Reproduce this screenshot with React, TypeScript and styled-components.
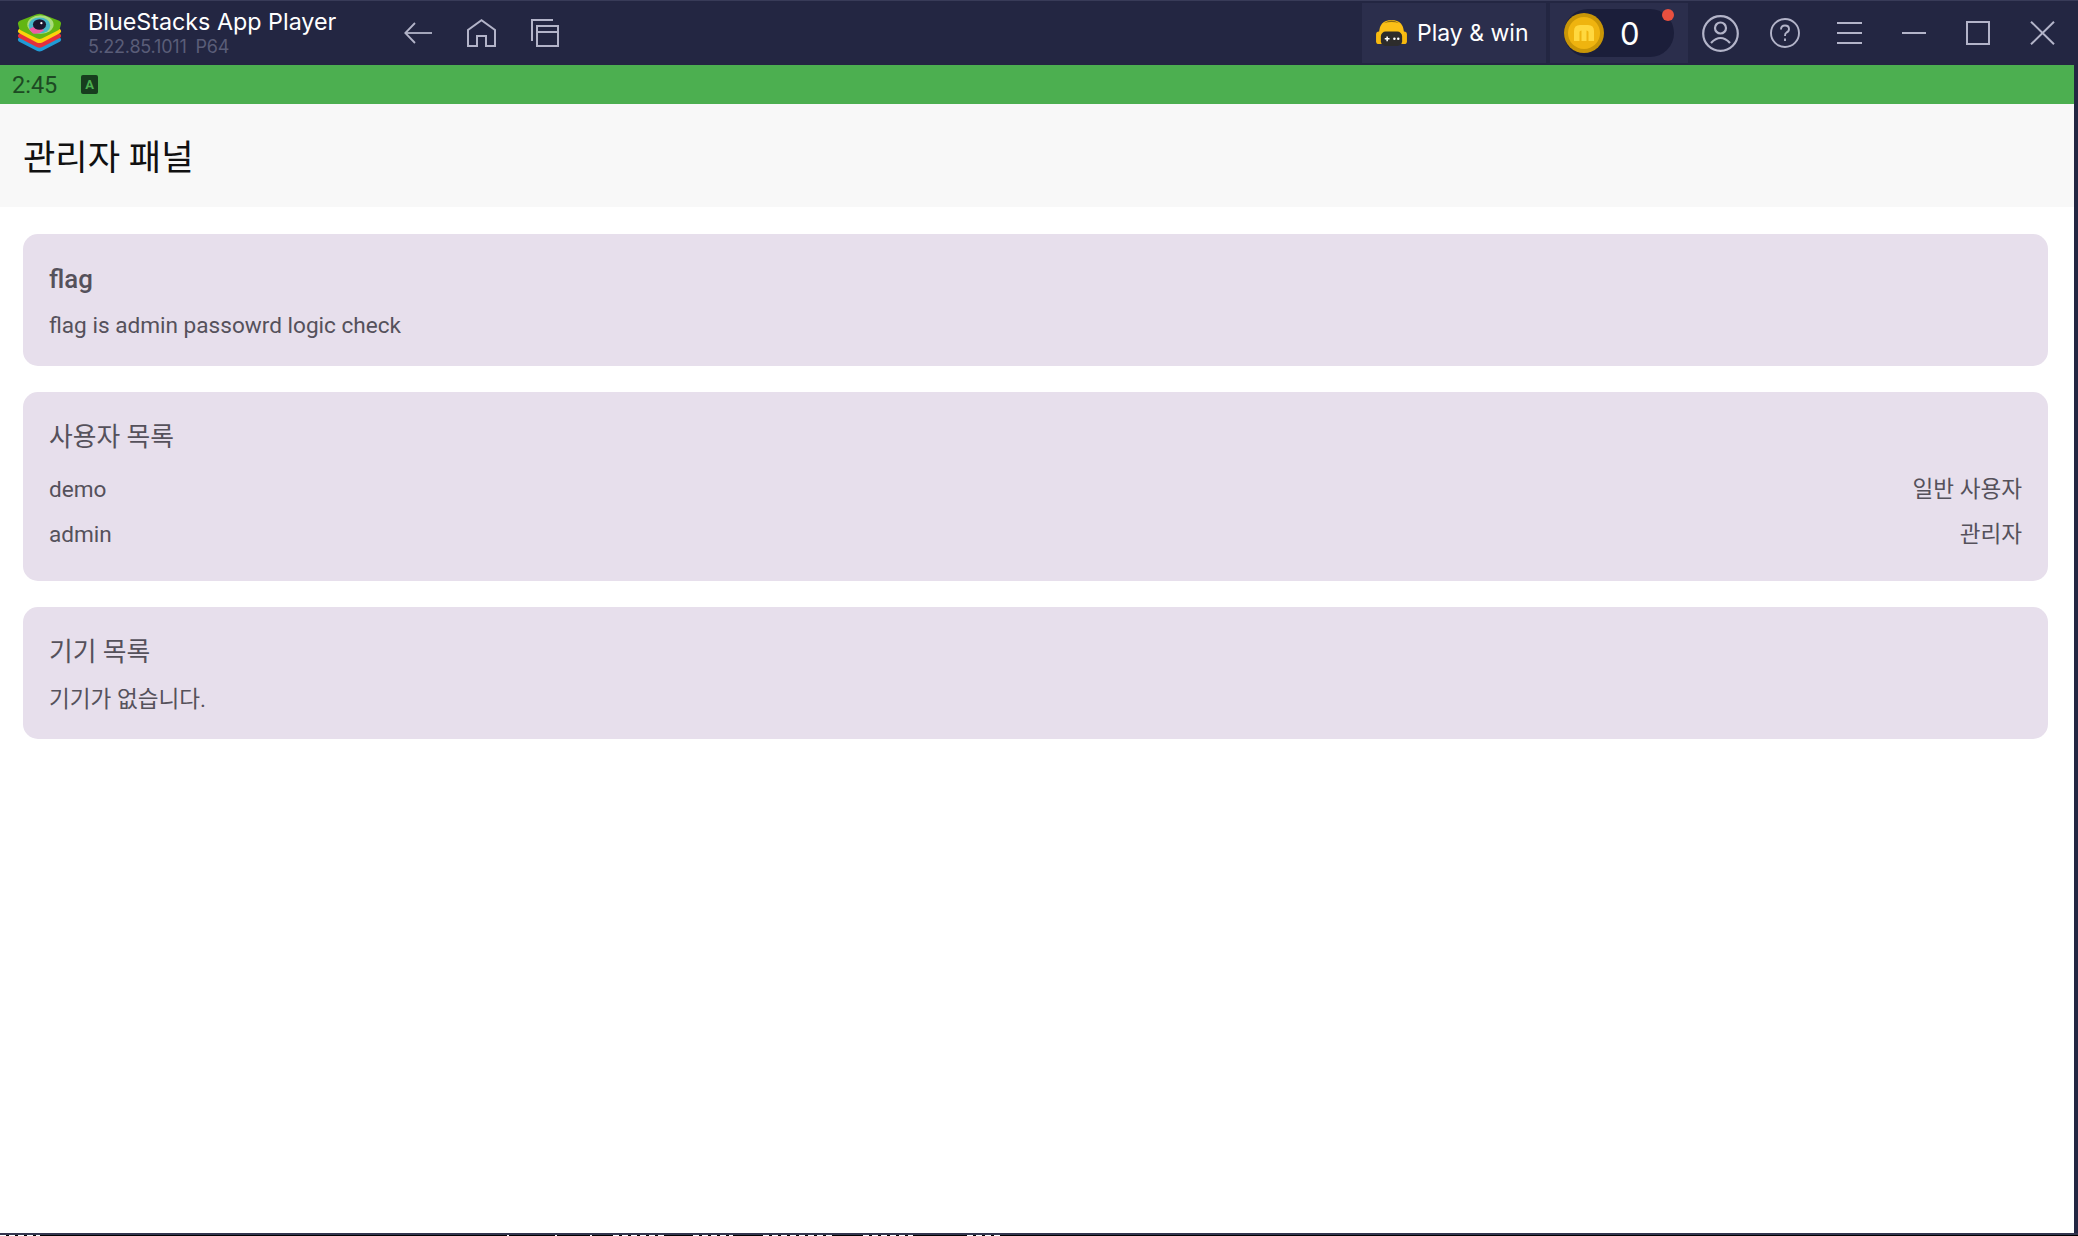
import styled, { createGlobalStyle } from 'styled-components';

const GlobalStyle = createGlobalStyle`
  html, body {
    margin: 0;
    padding: 0;
    height: 100%;
    background: #fff;
    overflow: hidden;
  }
  #root {
    height: 100%;
  }
`;

const Window = styled.div`
  width: 2078px;
  height: 1236px;
  display: flex;
  flex-direction: column;
  background: #232642;
  font-family: 'Roboto', 'Noto Sans CJK KR', sans-serif;
`;

const TitleBar = styled.header`
  height: 64px;
  flex: none;
  display: flex;
  align-items: center;
  border-top: 1px solid #383b58;
  color: #fff;
  font-family: 'Inter', 'Liberation Sans', sans-serif;
`;

const LogoSlot = styled.div`
  width: 88px;
  flex: none;
  padding-left: 16px;
  box-sizing: border-box;
  svg {
    display: block;
  }
`;

const Brand = styled.div`
  width: 316px;
  flex: none;
  display: flex;
  flex-direction: column;
  margin-top: -1px;
`;

const BrandName = styled.div`
  font-size: 23.3px;
  line-height: 27px;
`;

const BrandVersion = styled.div`
  font-size: 18px;
  line-height: 23px;
  color: #5a5d78;
  display: flex;
  gap: 9px;
  letter-spacing: -0.2px;
`;

const NavGroup = styled.nav`
  display: flex;
  align-items: center;
  gap: 35px;
  color: #b3b4c9;
  svg {
    display: block;
  }
`;

const Spacer = styled.div`
  flex: 1;
`;

const PromoTile = styled.div<{ $width: number }>`
  width: ${p => p.$width}px;
  height: 60px;
  flex: none;
  box-sizing: border-box;
  display: flex;
  align-items: center;
  background: #2b2e4c;
`;

const PlayTile = styled(PromoTile)`
  padding-left: 13px;
  margin-right: 4px;
`;

const PlayLabel = styled.span`
  font-size: 23px;
  margin-left: 9px;
`;

const CoinTile = styled(PromoTile)`
  padding-left: 14px;
`;

const CoinPill = styled.div`
  position: relative;
  width: 110px;
  height: 48px;
  display: flex;
  align-items: center;
  background: #1b1e3a;
  border-radius: 24px;
`;

const CoinCount = styled.span`
  font-size: 31px;
  margin-left: 16px;
`;

const RedDot = styled.span`
  position: absolute;
  top: 0;
  right: 0;
  width: 12px;
  height: 12px;
  border-radius: 50%;
  background: #e8503f;
`;

const ControlGroup = styled.div`
  width: 390px;
  flex: none;
  box-sizing: border-box;
  padding-right: 3px;
  display: flex;
  align-items: center;
  color: #b3b4c9;
`;

const ControlSlot = styled.div`
  flex: 1;
  display: flex;
  justify-content: center;
  align-items: center;
  svg {
    display: block;
  }
`;

const Body = styled.div`
  flex: 1;
  min-height: 0;
  display: flex;
`;

const Screen = styled.main`
  flex: 1;
  min-width: 0;
  display: flex;
  flex-direction: column;
  background: #fff;
`;

const RightEdge = styled.div`
  width: 4px;
  flex: none;
  background: #232642;
`;

const BottomEdge = styled.div`
  height: 3px;
  flex: none;
  display: flex;
  flex-direction: column;
  background: #34364f;
`;

const CutOffTextRow = styled.div`
  height: 1px;
  margin-top: 2px;
  display: flex;
  background: #000;
`;

const CutOffGlyph = styled.span<{ $left: number; $width: number }>`
  margin-left: ${p => p.$left}px;
  width: ${p => p.$width}px;
  background: repeating-linear-gradient(90deg, #fff 0 6px, #000 6px 9px);
`;

const StatusBar = styled.div`
  height: 39px;
  flex: none;
  display: flex;
  align-items: center;
  padding-left: 12px;
  background: #4caf50;
  color: #1d4a23;
  font-size: 23.5px;
`;

const StatusTime = styled.span`
  width: 69px;
`;

const KeyboardBadge = styled.span`
  width: 17px;
  height: 19px;
  display: flex;
  align-items: center;
  justify-content: center;
  background: #173d1e;
  border-radius: 2px;
  color: #4caf50;
  font-size: 13px;
  font-weight: 700;
  line-height: 1;
`;

const AppBar = styled.div`
  height: 103px;
  box-sizing: border-box;
  padding: 0 0 2px 23px;
  flex: none;
  display: flex;
  align-items: center;
  background: #f8f8f8;
  color: #111;
`;

const AppTitle = styled.h1`
  margin: 0;
  font-size: 35.2px;
  font-weight: 400;
`;

const CardList = styled.div`
  display: flex;
  flex-direction: column;
  gap: 26px;
  padding: 27px 26px 0 23px;
`;

const Card = styled.section<{ $height: number }>`
  height: ${p => p.$height}px;
  box-sizing: border-box;
  padding: 0 26px;
  display: flex;
  flex-direction: column;
  background: #e7dfec;
  border-radius: 15px;
  color: #55515b;
`;

const CardTitle = styled.h2<{ $bold?: boolean }>`
  margin: 28px 0 0;
  font-size: 25.8px;
  line-height: 34px;
  font-weight: ${p => (p.$bold ? 500 : 400)};
`;

const CardText = styled.p<{ $top: number }>`
  margin: ${p => p.$top}px 0 0;
  font-size: 22.6px;
  line-height: 32px;
`;

const UserRow = styled.div<{ $top: number }>`
  margin-top: ${p => p.$top}px;
  display: flex;
  justify-content: space-between;
  font-size: 22.6px;
  line-height: 32px;
`;

const cutOffGlyphs = [
  { left: 0, width: 40 },
  { left: 467, width: 2 },
  { left: 46, width: 2 },
  { left: 33, width: 2 },
  { left: 21, width: 54 },
  { left: 26, width: 40 },
  { left: 30, width: 70 },
  { left: 30, width: 50 },
  { left: 54, width: 33 },
];

const BlueStacksLogo = () => (
  <svg width="47" height="40" viewBox="0 0 50 42">
    <path d="M25 16 L47 26 Q49 28 47 30 L28 40 Q25 41.5 22 40 L3 30 Q1 28 3 26Z" fill="#1f9bd6" />
    <path d="M25 12 L47 22 Q49 24 47 26 L28 36 Q25 37.5 22 36 L3 26 Q1 24 3 22Z" fill="#e32f3c" />
    <path d="M25 7 L47 17 Q49 19 47 21 L28 31 Q25 32.5 22 31 L3 21 Q1 19 3 17Z" fill="#fbd40b" />
    <path d="M22 1 Q25 0 28 1 L46 8 Q48 9 48 11 L47 15 Q47 17 45 18 L28 26.5 Q25 28 22 26.5 L5 18 Q3 17 3 15 L2 11 Q2 9 4 8Z" fill="#62b613" />
    <ellipse cx="26" cy="12" rx="14" ry="10" fill="#a9dc7b" />
    <ellipse cx="25" cy="13" rx="11.5" ry="8.5" fill="#46b7c8" />
    <path d="M14 17 Q20 11 30 18 Q24 23 18 21.5Z" fill="#ee5ca6" />
    <ellipse cx="25" cy="12" rx="7" ry="5.6" fill="#1a1830" />
    <circle cx="27" cy="10.5" r="1.2" fill="#fff" />
  </svg>
);

const BackIcon = () => (
  <svg width="28" height="22" viewBox="0 0 28 22" fill="none" stroke="currentColor" strokeWidth="1.8">
    <path d="M11 1 L1.3 11 L11 21" />
    <path d="M1.3 11H28" />
  </svg>
);

const HomeIcon = () => (
  <svg width="29" height="28" viewBox="0 0 29 28" fill="none" stroke="currentColor" strokeWidth="2">
    <path d="M1 27V11L14.5 1.3L28 11V27H19V17H10V27Z" />
  </svg>
);

const RecentsIcon = () => (
  <svg width="28" height="28" viewBox="0 0 28 28" fill="none" stroke="currentColor" strokeWidth="2">
    <path d="M1 22V1H22" />
    <rect x="6" y="7" width="21" height="20" />
    <path d="M6 13H27" />
  </svg>
);

const GameHeadIcon = () => (
  <svg width="33" height="28" viewBox="0 0 34 29" style={{ flex: 'none' }}>
    <rect x="1" y="13" width="7" height="13" rx="3" fill="#f7b90f" />
    <rect x="26" y="13" width="7" height="13" rx="3" fill="#f7b90f" />
    <path d="M4 16 Q4 1 17 1 Q30 1 30 16Z" fill="#fbbf16" />
    <path d="M9 4.5 Q17 -1.5 25 4.5 Q17 1.5 9 4.5Z" fill="#8c6a10" />
    <rect x="6" y="13" width="22" height="15" rx="5" fill="#2d2c2b" />
    <path d="M10 20.5H15M12.5 18V23" stroke="#fff" strokeWidth="1.6" />
    <circle cx="20" cy="20.5" r="1.3" fill="#fff" />
    <circle cx="24" cy="20.5" r="1.3" fill="#fff" />
  </svg>
);

const CoinIcon = () => (
  <svg width="40" height="40" viewBox="0 0 40 40" style={{ flex: 'none' }}>
    <circle cx="20" cy="20" r="20" fill="#c99607" />
    <circle cx="20" cy="20" r="16" fill="#efb40f" />
    <path
      d="M10 18 Q10 12 16 12 H24 Q30 12 30 18 V28 H24.5 V19 Q24.5 17.5 22.5 17.5 V28 H17.5 V17.5 Q15.5 17.5 15.5 19 V28 H10Z"
      fill="#ffd83f"
    />
  </svg>
);

const AccountIcon = () => (
  <svg width="37" height="37" viewBox="0 0 37 37" fill="none" stroke="currentColor" strokeWidth="2.2">
    <circle cx="18.5" cy="18.5" r="17.3" />
    <circle cx="18.5" cy="13" r="5.5" />
    <path d="M9 28 Q18.5 18 28 28" />
  </svg>
);

const HelpIcon = () => (
  <svg width="30" height="30" viewBox="0 0 30 30" fill="none" stroke="currentColor" strokeWidth="1.9">
    <circle cx="15" cy="15" r="14" />
    <path d="M11 11.5 Q11 7.5 15 7.5 Q19 7.5 19 11 Q19 13.5 16.5 14.5 Q15 15.2 15 18" />
    <path d="M15 20.5V23" />
  </svg>
);

const MenuIcon = () => (
  <svg width="25" height="22" viewBox="0 0 25 22" fill="none" stroke="currentColor" strokeWidth="2">
    <path d="M0 1H25M0 11H25M0 21H25" />
  </svg>
);

const MinimizeIcon = () => (
  <svg width="24" height="2" viewBox="0 0 24 2" fill="none" stroke="currentColor" strokeWidth="2">
    <path d="M0 1H24" />
  </svg>
);

const MaximizeIcon = () => (
  <svg width="24" height="24" viewBox="0 0 24 24" fill="none" stroke="currentColor" strokeWidth="2">
    <rect x="1" y="1" width="22" height="22" />
  </svg>
);

const CloseIcon = () => (
  <svg width="25" height="24" viewBox="0 0 25 24" fill="none" stroke="currentColor" strokeWidth="2">
    <path d="M1 0.7L24 23.3M24 0.7L1 23.3" />
  </svg>
);

const App = () => {
  return (
    <Window>
      <GlobalStyle />
      <TitleBar>
        <LogoSlot>
          <BlueStacksLogo />
        </LogoSlot>
        <Brand>
          <BrandName>BlueStacks App Player</BrandName>
          <BrandVersion>
            <span>5.22.85.1011</span>
            <span>P64</span>
          </BrandVersion>
        </Brand>
        <NavGroup>
          <BackIcon />
          <HomeIcon />
          <RecentsIcon />
        </NavGroup>
        <Spacer />
        <PlayTile $width={184}>
          <GameHeadIcon />
          <PlayLabel>Play &amp; win</PlayLabel>
        </PlayTile>
        <CoinTile $width={138}>
          <CoinPill>
            <CoinIcon />
            <CoinCount>0</CoinCount>
            <RedDot />
          </CoinPill>
        </CoinTile>
        <ControlGroup>
          <ControlSlot>
            <AccountIcon />
          </ControlSlot>
          <ControlSlot>
            <HelpIcon />
          </ControlSlot>
          <ControlSlot>
            <MenuIcon />
          </ControlSlot>
          <ControlSlot>
            <MinimizeIcon />
          </ControlSlot>
          <ControlSlot>
            <MaximizeIcon />
          </ControlSlot>
          <ControlSlot>
            <CloseIcon />
          </ControlSlot>
        </ControlGroup>
      </TitleBar>
      <Body>
        <Screen>
          <StatusBar>
            <StatusTime>2:45</StatusTime>
            <KeyboardBadge>A</KeyboardBadge>
          </StatusBar>
          <AppBar>
            <AppTitle>관리자 패널</AppTitle>
          </AppBar>
          <CardList>
            <Card $height={132}>
              <CardTitle $bold>flag</CardTitle>
              <CardText $top={14}>flag is admin passowrd logic check</CardText>
            </Card>
            <Card $height={189}>
              <CardTitle>사용자 목록</CardTitle>
              <UserRow $top={20}>
                <span>demo</span>
                <span>일반 사용자</span>
              </UserRow>
              <UserRow $top={13}>
                <span>admin</span>
                <span>관리자</span>
              </UserRow>
            </Card>
            <Card $height={132}>
              <CardTitle>기기 목록</CardTitle>
              <CardText $top={15}>기기가 없습니다.</CardText>
            </Card>
          </CardList>
        </Screen>
        <RightEdge />
      </Body>
      <BottomEdge>
        <CutOffTextRow>
          {cutOffGlyphs.map((g, i) => (
            <CutOffGlyph key={i} $left={g.left} $width={g.width} />
          ))}
        </CutOffTextRow>
      </BottomEdge>
    </Window>
  );
};

export default App;
